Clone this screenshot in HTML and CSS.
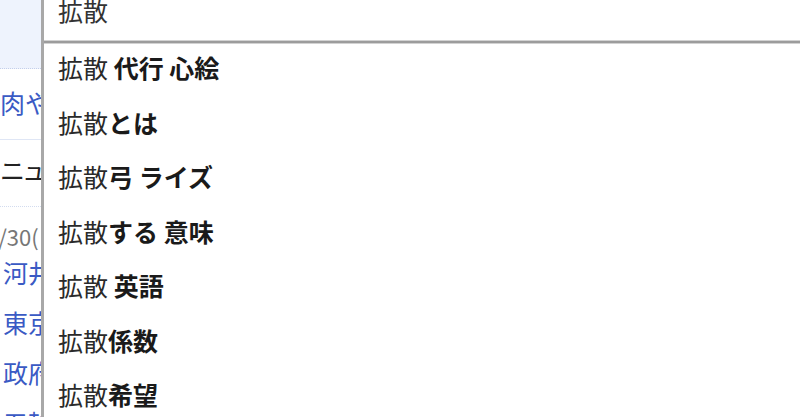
FILE: index.html
```html
<!DOCTYPE html>
<html lang="ja">
<head>
    <meta charset="UTF-8">
    <meta name="viewport" content="width=device-width, initial-scale=1.0">
    <title>拡散 - 検索</title>
    <link rel="stylesheet" href="styles.css">
</head>
<body>

<div class="page">
    <div class="side">
        <div class="side-head"></div>
        <div class="topic"><a href="#">肉や</a></div>
        <div class="news-title">ニュー</div>
        <div class="news-date">9/30(</div>
        <ul class="news-list">
            <li><a href="#">河井</a></li>
            <li><a href="#">東京</a></li>
            <li><a href="#">政府</a></li>
            <li><a href="#">五輪</a></li>
        </ul>
    </div>

    <div class="suggest">
        <div class="suggest-input">拡散</div>
        <div class="suggest-rule"></div>
        <ul class="suggest-list">
            <li>拡散<b> 代行 心絵</b></li>
            <li>拡散<b>とは</b></li>
            <li>拡散<b>弓 ライズ</b></li>
            <li>拡散<b>する 意味</b></li>
            <li>拡散<b> 英語</b></li>
            <li>拡散<b>係数</b></li>
            <li>拡散<b>希望</b></li>
        </ul>
    </div>
</div>

</body>
</html>
```

FILE: styles.css
```css
body {
    margin: 0;
    font-family: "Noto Sans CJK JP", "Noto Sans", sans-serif;
    font-size: 25px;
    color: #222;
    background-color: #fff;
    overflow: hidden;
}

.page {
    position: relative;
    height: 417px;
    overflow: hidden;
}

.side {
    width: 41px;
    overflow: hidden;
    white-space: nowrap;
}

.side a {
    color: #3a5ac4;
    text-decoration: none;
}

.side-head {
    height: 68px;
    background-color: #eef3fd;
    border-bottom: 1px dotted #c4cfea;
}

.topic {
    height: 70px;
    line-height: 66px;
    border-bottom: 1px solid #dfe6f5;
}

.news-title {
    height: 66px;
    line-height: 58px;
    letter-spacing: -3px;
    border-bottom: 1px dotted #d3dcef;
}

.news-date {
    box-sizing: border-box;
    height: 40px;
    padding-top: 18px;
    line-height: 22px;
    font-size: 22px;
    color: #777;
    margin-left: -14px;
}

.news-list {
    list-style: none;
    margin: 0;
    padding: 0 0 0 3px;
}

.news-list li {
    line-height: 50px;
}

/* suggest box lies over the page */
.suggest {
    position: absolute;
    top: 0;
    left: 41px;
    right: 0;
    bottom: 0;
    background-color: #fff;
    border-left: 3px solid #a8a8a8;
}

.suggest-input {
    height: 40px;
    line-height: 20px;
    padding-left: 14px;
    color: #333;
}

.suggest-rule {
    height: 2px;
    background-color: #9c9c9c;
    border-top: 1px solid #d2d2d2;
    border-bottom: 1px solid #d2d2d2;
}

.suggest-list {
    list-style: none;
    margin: -4px 0 0;
    padding: 0;
}

.suggest-list li {
    height: 54.5px;
    line-height: 54.5px;
    padding-left: 14px;
    color: #2a2a2a;
}

.suggest-list b {
    font-weight: bold;
    color: #1a1a1a;
}
```
